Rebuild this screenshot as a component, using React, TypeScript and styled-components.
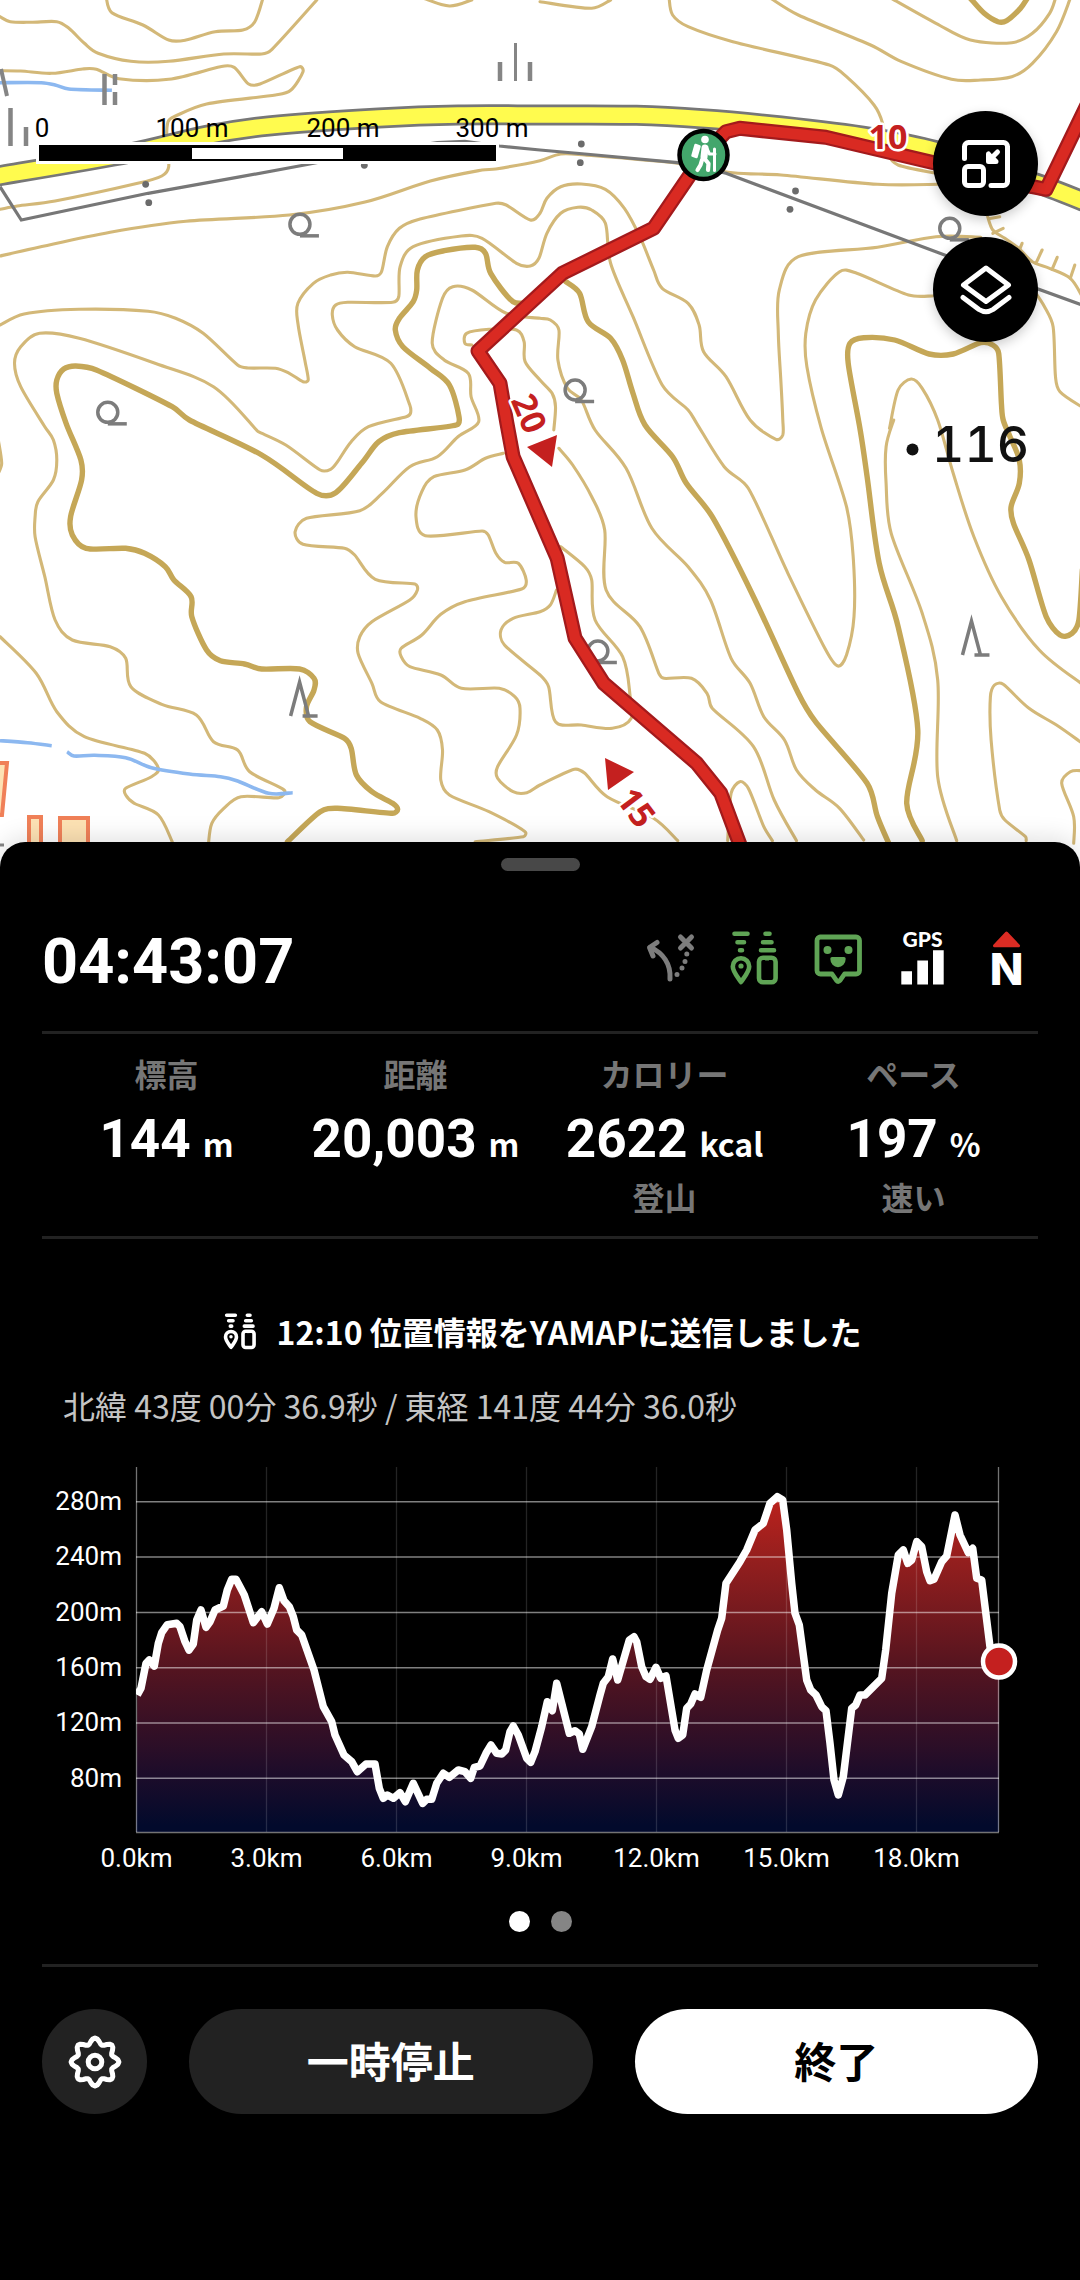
import React from 'react';
import styled, { createGlobalStyle } from 'styled-components';

const GlobalStyle = createGlobalStyle`
  * { box-sizing: border-box; }
  html, body { margin: 0; padding: 0; background: #000; }
  body { font-family: Roboto, 'Noto Sans CJK JP', sans-serif; color: #fff; }
  button { font: inherit; border: 0; padding: 0; margin: 0; cursor: pointer; }
  p, dl, dt, dd { margin: 0; }
`;

/* ---------- geometry helpers ---------- */

type Point = [number, number];
type Sheet = Record<string, { sx: number; sy: number; dx: number; dy: number }>;

// Survey sheets of the map: each letter in a trace switches to that sheet's origin.
const MAP_SHEETS: Sheet = {
  A: { sx: 2.904, sy: 3, dx: 0, dy: 0 },
  B: { sx: 2.904, sy: 3, dx: 540, dy: 0 },
  C: { sx: 2.904, sy: 3, dx: 0, dy: 420 },
  D: { sx: 2.904, sy: 3, dx: 540, dy: 420 },
};

const CHART_SHEETS: Sheet = {
  E: { sx: 3, sy: 3, dx: -2, dy: 0 },
  F: { sx: 3, sy: 3, dx: 498, dy: 0 },
};

const parse = (trace: string, sheets: Sheet): Point[] => {
  const points: Point[] = [];
  let sheet = Object.values(sheets)[0];
  trace.trim().split(/\s+/).forEach((token) => {
    if (sheets[token]) {
      sheet = sheets[token];
      return;
    }
    const [x, y] = token.split(',').map(Number);
    points.push([x / sheet.sx + sheet.dx, y / sheet.sy + sheet.dy]);
  });
  return points;
};

const fmt = (n: number) => n.toFixed(1);

const straight = (p: Point[]) => 'M' + p.map(([x, y]) => `${fmt(x)} ${fmt(y)}`).join('L');

const smooth = (p: Point[]) => {
  let d = `M${fmt(p[0][0])} ${fmt(p[0][1])}`;
  for (let i = 0; i < p.length - 1; i++) {
    const a = p[i - 1] || p[i];
    const b = p[i];
    const c = p[i + 1];
    const e = p[i + 2] || c;
    const len = Math.hypot(c[0] - b[0], c[1] - b[1]);
    const handle = (from: Point, to: Point) => {
      const span = Math.hypot(to[0] - from[0], to[1] - from[1]) || 1;
      const k = Math.min(1 / 6, (len * 0.38) / span);
      return [(to[0] - from[0]) * k, (to[1] - from[1]) * k];
    };
    const h1 = handle(a, c);
    const h2 = handle(b, e);
    d += `C${fmt(b[0] + h1[0])} ${fmt(b[1] + h1[1])} ${fmt(c[0] - h2[0])} ${fmt(c[1] - h2[1])} ${fmt(c[0])} ${fmt(c[1])}`;
  }
  return d;
};

/* ---------- map data ---------- */

const CONTOURS = [
  'A 0,50 30,65 90,67 165,65 200,85 245,130 285,160 380,184 490,184 650,162 760,162 790,148 920,0',
  'A 308,-10 325,38 415,75 490,120 540,120 625,95 705,90 740,65 765,-10',
  'A 0,212 60,213 150,220 240,207 280,208 345,236 490,238 640,200 680,202 722,252 755,252 870,200 880,215 845,270 800,285 600,312 510,348 488,365 484,420 490,500 470,528 400,550 160,603 50,618 0,628',
  'A 0,768 100,745 320,697 540,664 840,645 1060,606 1250,543 1400,510 1440,507 1568,482 B 60,462 130,465 400,490 560,518 700,525 980,553 1160,553',
  'B 375,-5 385,45 430,80 560,125 840,195 890,230 970,315 995,370 1010,460 1040,495 1150,520',
  'A 1230,-5 1305,18 1370,0',
  'B 0,5 150,25 205,0',
  'B 670,-5 750,45 960,135 1050,185 1195,238 1280,240 1370,230 1430,190 1500,95 1540,-5',
  'B 1020,-5 1150,70 1250,120 1370,128 1430,100 1480,40 1497,-5',
  'A 0,975 70,942 230,928 430,934 510,955 590,1000 690,1095 720,1104 800,1105 840,1120 880,1145 895,1140 885,1080 865,970 865,910 910,850 960,825 1010,817 1090,828 1108,815 1125,740 1160,685 1220,657 1440,610 1470,615 1540,660 B 0,640 20,595 60,560 120,552 190,568 245,625 290,710 330,810 355,865 430,910 462,975 475,1055 540,1130 D 610,0 685,58 705,45 705,0 B 700,1150 692,1000 695,870 750,770 980,742 1150,710 1280,712',
  'C 605,1275 615,1210 650,1165 700,1130 810,1133 825,1110 725,1055 690,990 620,965 570,885 470,853 380,800 365,715 320,680 210,660 160,600 130,470 102,350 102,290 110,245 155,180 165,120 155,60 A 130,1280 60,1160 42,1090 60,1040 115,1000 230,1015 450,1090 620,1160 745,1290 C 750,35 830,75 930,150 960,148 980,125 1020,65 1070,20 A 1180,1250 1192,1240 1190,1215 1135,1090 1030,1040 980,990 965,945 975,915 1010,907 1140,907 1158,890 1162,800 1200,740 1340,708 1400,715 1500,790 1540,798 1565,775 B 20,700 60,640 110,622 150,630 190,670 205,790 270,950 355,1155 430,1230 D 455,10 535,140 605,205 720,460 830,690 865,738 890,705 912,590 910,420 890,260 B 817,1285 775,1100 772,1000 800,900 870,815 920,820 1070,885 1140,888',
  'B 1440,880 1465,920 1490,980 1497,1130 1510,1175 1575,1222',
  'C 1380,1265 1520,1250 1525,1235 1420,1175 1305,1125 1280,1080 1285,990 1270,930 1220,895 1105,845 1080,790 1040,700 1045,650 1080,605 1190,540 1212,510 1205,492 1090,478 1030,405 1000,385 880,373 857,335 890,295 1045,272 1110,220 1190,140 1270,110 1330,50 1390,5 A 1368,1190 1360,1120 1290,1080 1255,1030 1285,895 1315,860 1370,870 1470,940 B 0,955 30,960 55,990 52,1080 80,1165 120,1200 160,1290 D 250,145 325,325 430,440 495,540 555,715 610,790 650,890 710,960 745,1050 800,1110 870,1165 940,1260',
  'A 1370,1035 1350,1030 1355,1000 1420,988 1500,990 1522,1025 1525,1085 B 0,1140 35,1180 45,1220 40,1290',
  'D 55,85 95,135 150,230 188,330 192,510 290,620 345,760 360,775 440,775 485,820 500,865 620,980 680,1140 745,1262',
  'C 1462,100 1410,115 1350,150 1260,170 1225,215 1208,290 1235,347 1400,333 1418,345 1440,400 1465,427 1505,430 1528,480 1515,507 1350,545 1280,583 1225,645 1165,685 1165,710 1190,740 1280,765 1340,805 1450,805 1495,830 1510,865 1500,945 1445,1040 1445,1075 1490,1115 1530,1118 D 0,1095 100,1048 130,1060 195,1130 330,1195 400,1262',
  'D 48,510 30,555 0,575 C 1490,595 1455,630 1465,675 D 0,765 25,800 45,905 120,915 210,925 265,895 262,830 240,710 160,600 150,480 130,440 60,380',
  'D 545,1262 555,1120 580,1085 605,1105 650,1220 675,1262',
  'B 1015,1285 1040,1170 1078,1137 1110,1165 D 1155,0 1200,160 1260,350 1340,530 1450,690 1575,793',
  'D 1027,0 1005,80 1005,190 1020,340 1110,580 1155,780 1155,1070 1210,1262',
  'D 1575,970 1500,915 1420,865 1345,793 1320,795 1308,830 1310,960 1335,1170 1350,1200 1410,1250 1412,1262',
  'D 1575,1052 1540,1055 1515,1090 1550,1190 1550,1270',
  'C -5,60 5,130 -5,160',
  'C 0,650 105,760 165,875 245,950 420,1000 460,1045 440,1070 365,1105 365,1125 390,1150 460,1185 500,1265',
  'B 1300,650 1315,690 1350,715 1390,745 1430,785 1480,805 1540,835 1575,890',
];

const CLIFF_TICKS = [
  'B 1303,656 1335,650', 'B 1315,700 1345,685', 'B 1390,755 1400,730',
  'B 1440,790 1458,750', 'B 1487,808 1502,772', 'B 1540,835 1553,795',
];

const INDEX_CONTOURS = [
  'B 1250,-5 1290,40 1330,65 1355,62 1395,25 1415,-5',
  'C 835,1265 930,1175 980,1165 1140,1180 1155,1168 1140,1150 1080,1115 1035,1065 1020,985 1000,955 900,905 890,860 912,810 912,775 870,747 760,747 710,732 640,722 600,690 557,590 555,530 505,480 480,440 420,400 365,385 250,385 210,345 205,290 237,180 235,120 A 192,1270 165,1180 165,1140 185,1107 220,1098 280,1110 500,1220 C 550,0 760,105 920,220 975,218 1050,130 1100,65 1160,38 1325,15 A 1333,1250 1305,1155 1250,1105 1170,1040 1148,990 1160,955 1200,905 1210,870 1212,810 1235,770 1290,752 1380,742 1410,760 1425,820 1490,905 1540,905',
  'B 75,845 115,880 140,965 205,1015 240,1080 270,1180 D 305,15 385,110 425,190 500,290 620,530 750,820 800,905 950,1090 980,1190 1015,1275',
  'D 1110,1262 1065,1150 1097,930 1040,620 985,430 950,170 B 930,1290 895,1090 900,1030 940,1013 1030,1020 1130,1062 1200,1062 1280,1028 1315,1035 1332,1060 1340,1210 D 1345,0 1365,50 1392,120 1392,190 1368,260 1375,310 1420,420 1470,590 1510,645 1545,640 1565,600 1575,450',
];

const STREAMS = [
  'A 0,248 120,248 160,255 200,267 325,271',
  'C 0,962 80,968 150,977',
  'C 195,995 215,1008 275,1006 365,1013 440,1043 550,1062 640,1070 690,1083 780,1120 850,1118',
];

const ROAD =
  'A -20,530 375,460 600,406 780,378 1100,354 1330,345 B 0,345 280,346 470,356 700,378 960,412 1150,452 1450,553 1600,613';

const POWER_LINE = 'A 0,560 62,660 430,580 700,530 900,492 1050,462 1270,428 1350,424 1450,438 B 0,450 130,462 400,488 540,520 1175,765 1600,925';

const ROUTE =
  'B 1600,290 1470,568 1430,560 1150,490 830,412 580,385 540,395 475,465 330,685 65,820 A 1388,1053 1452,1150 C 1472,10 1490,110 D 50,415 102,655 185,790 455,1030 525,1120 590,1300';

const DOTS: Point[] = parse('A 423,553 432,608 1058,496 B 120,432 117,488 742,573 726,628', MAP_SHEETS);
const BROADLEAF: Point[] = parse('A 871,673 313,1237 B 1190,685 102,1170 D 168,693', MAP_SHEETS);
const CONIFERS: Point[] = parse('C 870,888 D 1253,705', MAP_SHEETS);

const INK = '#6b6b6b';
const RED = '#c4201f';

const SCALE_TICKS = [
  { x: 42, label: '0' },
  { x: 192, label: '100 m' },
  { x: 343, label: '200 m' },
  { x: 492, label: '300 m' },
];

/* ---------- map ---------- */

const MapArea = styled.section`
  position: relative;
  background: #fff;
`;

const MapDrawing = styled.svg`
  display: block;
  width: 100%;
  height: auto;
`;

const MapControls = styled.div`
  position: absolute;
  top: 111px;
  right: 42px;
  display: flex;
  flex-direction: column;
  gap: 21px;
`;

const MapButton = styled.button`
  display: grid;
  place-items: center;
  width: 105px;
  height: 105px;
  border-radius: 50%;
  background: #000;
  box-shadow: 0 4px 12px rgba(0, 0, 0, 0.2);
`;

const RouteLabel = styled.text`
  font: 700 34px 'Noto Sans', sans-serif;
  fill: ${RED};
  stroke: #fff;
  stroke-width: 5px;
  stroke-linejoin: round;
  paint-order: stroke;
  text-anchor: middle;
  dominant-baseline: central;
`;

const SpotHeight = styled.text`
  font: 500 50px Inter, sans-serif;
  font-variant-numeric: tabular-nums;
  fill: #111;
`;

const ScaleLabel = styled.text`
  font: 400 26px Roboto, sans-serif;
  fill: #000;
  text-anchor: middle;
`;

const Hiker = () => (
  <g stroke="#fff" strokeLinecap="round" strokeLinejoin="round" fill="none">
    <circle cx="705" cy="139.500" r="3.800" fill="#fff" stroke="none" />
    <path d="M695.500 145L699.500 146.500L696.500 157L692.500 155.500Z" fill="#fff" strokeWidth="2.500" />
    <path d="M705 148L704 157" strokeWidth="7" />
    <path d="M706.500 147.500L709.500 154L715 154" strokeWidth="3" />
    <path d="M714.500 149V170.500" strokeWidth="3" />
    <path d="M704 158L708.500 163.500L708 170" strokeWidth="4.200" />
    <path d="M702 160L700.500 165L697.500 170" strokeWidth="4.200" />
  </g>
);

const TopoMap = () => (
  <MapDrawing viewBox="0 0 1080 868" role="img" aria-label="地図">
    <rect width="1080" height="868" fill="#fff" />
    <g fill="#fde2b4" stroke="#f08058" strokeWidth="4">
      <path d="M-4 763H7L2 815H-4z" />
      <rect x="29" y="817" width="12" height="44" />
      <rect x="60" y="818" width="28" height="44" />
    </g>
    <g fill="none" stroke="#d3b878" strokeWidth="3.100" strokeLinecap="round">
      {CONTOURS.map((t) => <path key={t} d={smooth(parse(t, MAP_SHEETS))} />)}
      {CLIFF_TICKS.map((t) => <path key={t} d={straight(parse(t, MAP_SHEETS))} />)}
    </g>
    <g fill="none" stroke="#c5a757" strokeWidth="5.400" strokeLinecap="round">
      {INDEX_CONTOURS.map((t) => <path key={t} d={smooth(parse(t, MAP_SHEETS))} />)}
    </g>
    <g fill="none" stroke="#8cb8f0" strokeWidth="3.600">
      {STREAMS.map((t) => <path key={t} d={smooth(parse(t, MAP_SHEETS))} />)}
    </g>
    <path d={straight(parse(POWER_LINE, MAP_SHEETS))} fill="none" stroke="#777" strokeWidth="3.200" />
    <path d={smooth(parse(ROAD, MAP_SHEETS))} fill="none" stroke="#777" strokeWidth="21" />
    <path d={smooth(parse(ROAD, MAP_SHEETS))} fill="none" stroke="#fffb4e" strokeWidth="15.500" />

    <g stroke="#858585" strokeWidth="4.500" fill="none">
      <path d="M104.500 74V105M115 74V85M115 92V105M10.500 108V146M26 127V146M500 62V81M530 62V81" />
      <path d="M515.500 43V81" strokeWidth="3" />
      <path d="M1 69L7 96" strokeWidth="4" />
      <path d="M0 845H4" strokeWidth="3" />
    </g>
    <g fill={INK}>
      {DOTS.map(([x, y]) => <circle key={`${x}-${y}`} cx={x} cy={y} r="3.400" />)}
    </g>
    <g fill="none" stroke="#7c7c7c" strokeWidth="3.500">
      {BROADLEAF.map(([x, y]) => (
        <g key={`${x}-${y}`}>
          <circle cx={x} cy={y} r="10" />
          <path d={`M${x} ${y + 11.5}h19`} />
        </g>
      ))}
      {CONIFERS.map(([x, y]) => (
        <path key={`${x}-${y}`} d={`M${x - 9} ${y}l9 -34l9 34m-6 0h15`} />
      ))}
    </g>
    <circle cx="912.500" cy="449.500" r="6" fill="#111" />
    <SpotHeight x="932" y="462">116</SpotHeight>

    <g fill="none" strokeLinejoin="round">
      <path d={straight(parse(ROUTE, MAP_SHEETS))} stroke="#a31a1c" strokeWidth="15" />
      <path d={straight(parse(ROUTE, MAP_SHEETS))} stroke="#d92a22" strokeWidth="10.500" />
    </g>
    <path d="M527 447L557 435L552 467ZM605 758L634 772L608 790Z" fill={RED} />
    <RouteLabel x="888" y="136">10</RouteLabel>
    <RouteLabel transform="translate(530 413) rotate(67)">20</RouteLabel>
    <RouteLabel transform="translate(637 807) rotate(53)">15</RouteLabel>

    <circle cx="703.500" cy="155" r="24" fill="#43a66c" stroke="#000" strokeWidth="4.500" />
    <Hiker />

    <rect x="36" y="142" width="463" height="22" fill="#fff" />
    <rect x="39" y="145" width="457" height="16" fill="#000" />
    <rect x="192" y="148" width="151" height="11" fill="#fff" />
    {SCALE_TICKS.map((t) => <ScaleLabel key={t.label} x={t.x} y="137">{t.label}</ScaleLabel>)}
  </MapDrawing>
);

const ShrinkIcon = () => (
  <svg width="48" height="48" viewBox="0 0 48 48" fill="none" stroke="#fff" strokeWidth="5" strokeLinecap="round" strokeLinejoin="round" aria-hidden="true">
    <path d="M2.500 18.500V6.500a4 4 0 0 1 4-4h35a4 4 0 0 1 4 4v35a4 4 0 0 1-4 4H29" />
    <rect x="2.500" y="26.500" width="19" height="19" rx="3.500" />
    <path d="M35.500 12L27.500 20" />
    <path d="M26.500 14V21.500H34L31 18.500L29 17z" fill="#fff" />
  </svg>
);

const LayersIcon = () => (
  <svg width="52" height="50" viewBox="0 0 52 50" fill="none" stroke="#fff" strokeWidth="5" strokeLinecap="round" strokeLinejoin="round" aria-hidden="true">
    <path d="M26 3L48.500 20L26 36.500L3.500 20Z" />
    <path d="M3 32.500L19 44.500Q26 49 33 44.500L49 32.500" />
  </svg>
);

/* ---------- status icons ---------- */

const StatusSvg = styled.svg<{ $size: number }>`
  display: block;
  flex: none;
  overflow: visible;
  width: ${(p) => p.$size}px;
  height: ${(p) => p.$size}px;
`;

const OffRouteIcon = () => (
  <StatusSvg $size={63} viewBox="0 0 63 63" fill="none" stroke="#7d7d7d" strokeWidth="5" strokeLinecap="round" strokeLinejoin="round" role="img" aria-label="ルート外れ警告">
    <path d="M31 53C32 38 24 27 11 21M18 16.500L10.500 21.500L14 30" />
    <path d="M41.500 11L52.500 22M52.500 11L41.500 22" />
    <path d="M47.800 28v0M46 35.500v0M43 42v0M38 48.500v0" />
  </StatusSvg>
);

const SharingIcon = ({ size, color, stroke }: { size: number; color: string; stroke: number }) => (
  <StatusSvg $size={size} viewBox="0 0 63 63" fill="none" stroke={color} strokeWidth={stroke} strokeLinecap="round" strokeLinejoin="round" role="img" aria-label="位置情報の送信">
    <path d="M11.500 7.800H24.500M14.500 16.200H21M17 24.200H19M42.500 7.800H46.500M40 16.200H48.500M38 24.200H51" />
    <path d="M18 56C13.500 49.500 9.800 45.500 9.800 40.500a8.200 8.200 0 0 1 16.400 0C26.200 45.500 22.500 49.500 18 56Z" />
    <circle cx="18" cy="40" r="2.600" fill={color} stroke="none" />
    <rect x="36" y="31.800" width="16.600" height="24.500" rx="4" />
    <path d="M41 31.500H47.500L46 34H42.500Z" fill={color} strokeWidth="1" />
  </StatusSvg>
);

const ChatIcon = () => (
  <StatusSvg $size={63} viewBox="0 0 63 63" fill="none" stroke="#5fa455" strokeWidth="4.800" strokeLinejoin="round" role="img" aria-label="メッセージ">
    <path d="M13 11H49a3.500 3.500 0 0 1 3.500 3.500V44.500a3.500 3.500 0 0 1-3.500 3.500H37.500L33 54.500Q31.200 56.500 29.500 54.500L25 48H13.500A3.500 3.500 0 0 1 10 44.500V14.500A3.500 3.500 0 0 1 13.500 11Z" />
    <g fill="#5fa455" stroke="none">
      <circle cx="20.500" cy="24" r="4" />
      <circle cx="41.500" cy="24" r="4" />
      <path d="M25 31H37a1.700 1.700 0 0 1 1.700 1.700a7.700 8.500 0 0 1-15.400 0A1.700 1.700 0 0 1 25 31Z" />
    </g>
  </StatusSvg>
);

const GpsText = styled.text`
  font: 900 21px Lato, sans-serif;
  fill: #fff;
  text-anchor: middle;
`;

const NorthText = styled.text`
  font: 800 44px Inter, sans-serif;
  fill: #fff;
  text-anchor: middle;
`;

const GpsIcon = () => (
  <StatusSvg $size={63} viewBox="0 0 63 63">
    <GpsText x="31.500" y="21">GPS</GpsText>
    <path d="M10.300 45.200H21V58.500H10.300ZM26.300 34.500H37V58.500H26.300ZM42 24.200H52.700V58.500H42Z" fill="#fff" />
  </StatusSvg>
);

const NorthIcon = () => (
  <StatusSvg $size={63} viewBox="0 0 63 63">
    <path d="M31.500 7L43.500 19.800H19.500Z" fill="#dc2c24" stroke="#dc2c24" strokeWidth="3" strokeLinejoin="round" />
    <NorthText x="31.500" y="58.500">N</NorthText>
  </StatusSvg>
);

const gearOutline = () => {
  const pts: Point[] = [];
  for (let i = 0; i < 64; i++) {
    const a = (i / 64) * Math.PI * 2;
    const r = 21 + 2.9 * Math.cos(8 * a);
    pts.push([27 + r * Math.sin(a), 27 - r * Math.cos(a)]);
  }
  return straight(pts) + 'Z';
};

const GearIcon = () => (
  <svg width="54" height="54" viewBox="0 0 54 54" fill="none" stroke="#fff" strokeWidth="5" strokeLinejoin="round" aria-hidden="true">
    <path d={gearOutline()} />
    <circle cx="27" cy="27" r="6.800" />
  </svg>
);

/* ---------- elevation chart ---------- */

const PROFILE =
  'E 292,735 303,715 318,640 328,630 343,648 355,580 365,548 382,524 410,520 420,530 435,575 447,600 460,582 470,510 483,480 498,532 510,515 525,480 550,468 562,420 575,388 588,388 600,410 613,435 640,518 665,485 682,522 702,475 718,413 732,452 748,470 760,500 770,540 785,555 822,660 850,770 875,815 885,855 912,915 935,935 952,965 978,942 1005,942 1018,1015 1030,1045 1042,1035 1060,1045 1080,1028 1096,1055 1120,1000 1148,1060 1160,1048 1175,1048 1190,1000 1210,970 1228,982 1255,960 1275,965 1292,985 1303,952 1320,948 1338,910 1353,885 1370,910 1385,912 1397,900 1410,845 1420,828 1435,855 1460,925 1472,937 1485,905 1505,830 1522,755 1537,782 ' +
  'F 50,700 88,850 105,842 118,852 128,898 155,830 180,735 190,700 205,680 218,627 233,690 268,570 282,560 290,575 305,650 318,680 330,688 348,652 362,685 378,678 405,840 415,865 428,855 440,775 452,762 465,732 482,742 500,660 533,540 545,505 558,400 600,335 620,300 645,240 670,220 690,160 712,140 728,150 740,240 755,400 765,490 778,525 800,690 812,720 828,735 845,770 858,782 870,880 882,990 895,1035 910,980 935,775 947,765 960,735 975,735 1025,685 1037,600 1055,430 1075,315 1090,300 1103,340 1115,330 1130,275 1145,290 1160,365 1170,392 1182,388 1205,335 1220,318 1245,195 1260,255 1285,308 1298,295 1310,385 1325,390 1350,590 1378,635';

const ALTITUDES = [280, 240, 200, 160, 120, 80];
const DISTANCES = [0, 3, 6, 9, 12, 15, 18];
const PLOT = { left: 94, right: 957, top: 17, bottom: 382 };

const ChartSvg = styled.svg`
  display: block;
  width: 100%;
  height: auto;
`;

const AxisLabel = styled.text<{ $anchor: string }>`
  font: 400 26px Roboto, sans-serif;
  fill: #fff;
  text-anchor: ${(p) => p.$anchor};
`;

const ElevationChart = () => {
  const points = parse(PROFILE, CHART_SHEETS);
  const line = smooth(points);
  return (
    <ChartSvg viewBox="0 0 996 440" role="img" aria-label="標高グラフ">
      <defs>
        <linearGradient id="elevation" gradientUnits="userSpaceOnUse" x1="0" y1="40" x2="0" y2="376">
          <stop offset="0" stopColor="#c0221c" />
          <stop offset="0.200" stopColor="#961f1e" />
          <stop offset="0.500" stopColor="#5a151f" />
          <stop offset="0.850" stopColor="#1c0c2a" />
          <stop offset="1" stopColor="#020a2c" />
        </linearGradient>
        <clipPath id="plot">
          <rect x={PLOT.left} y="0" width="902" height={PLOT.bottom} />
        </clipPath>
      </defs>
      <path d={`${line}L${PLOT.right} ${PLOT.bottom}L${PLOT.left} ${PLOT.bottom}Z`} fill="url(#elevation)" />
      {DISTANCES.map((km) => (
        <line key={km} x1={94.5 + (km / 3) * 130} x2={94.5 + (km / 3) * 130} y1={PLOT.top} y2={PLOT.bottom} stroke="#fff" strokeOpacity={km ? 0.14 : 0.45} strokeWidth="1.300" />
      ))}
      <line x1={PLOT.right - 0.5} x2={PLOT.right - 0.5} y1={PLOT.top} y2={PLOT.bottom} stroke="#fff" strokeOpacity="0.450" strokeWidth="1.300" />
      {ALTITUDES.map((m, i) => (
        <line key={m} x1={PLOT.left} x2={PLOT.right} y1={51.8 + i * 55.3} y2={51.8 + i * 55.3} stroke="#fff" strokeOpacity="0.500" strokeWidth="1.500" />
      ))}
      <line x1={PLOT.left} x2={PLOT.right} y1="382.500" y2="382.500" stroke="#fff" strokeOpacity="0.450" strokeWidth="1.300" />
      <path d={straight(points)} fill="none" stroke="#fff" strokeWidth="7.500" strokeLinejoin="round" clipPath="url(#plot)" />
      <circle cx="957" cy="211.500" r="16" fill={RED} stroke="#fff" strokeWidth="4.500" />
      {ALTITUDES.map((m, i) => (
        <AxisLabel key={m} $anchor="end" x="80" y={60 + i * 55.3}>{m}m</AxisLabel>
      ))}
      {DISTANCES.map((km) => (
        <AxisLabel key={km} $anchor="middle" x={94.5 + (km / 3) * 130} y="417">{km}.0km</AxisLabel>
      ))}
    </ChartSvg>
  );
};

/* ---------- bottom sheet ---------- */

const Panel = styled.main`
  position: relative;
  margin-top: -26px;
  padding: 16px 42px 42px;
  border-radius: 25px 25px 0 0;
  background: #000;
  box-shadow: 0 -4px 24px rgba(0, 0, 0, 0.12);
`;

const Handle = styled.button`
  display: block;
  width: 79px;
  height: 13px;
  margin: 0 auto;
  border-radius: 7px;
  background: #484848;
`;

const Header = styled.header`
  display: flex;
  align-items: flex-end;
  justify-content: space-between;
  padding: 55px 0 38px;
  border-bottom: 3px solid #222;
`;

const Timer = styled.time`
  font-size: 63px;
  line-height: 63px;
  font-weight: 700;
`;

const StatusIcons = styled.div`
  display: flex;
  gap: 21px;
  padding-bottom: 4px;
`;

const Stats = styled.dl`
  display: grid;
  grid-template-columns: repeat(4, 1fr);
  padding: 21px 0 16px;
  border-bottom: 3px solid #222;
  text-align: center;
`;

const Stat = styled.div`
  white-space: nowrap;
`;

const StatLabel = styled.dt`
  font-size: 32px;
  line-height: 42px;
  font-weight: 700;
  color: #767676;
`;

const StatValue = styled.dd`
  padding-top: 4px;
  font-size: 53px;
  line-height: 77px;
  font-weight: 700;
`;

const Unit = styled.span`
  margin-left: 12px;
  font-family: 'Noto Sans CJK JP', sans-serif;
  font-size: 32px;
  line-height: 1;
  font-weight: 700;
`;

const StatNote = styled.dd`
  font-size: 32px;
  line-height: 42px;
  font-weight: 700;
  color: #767676;
`;

const Notice = styled.p`
  display: flex;
  align-items: center;
  justify-content: center;
  gap: 16px;
  margin-top: 71px;
  font-family: 'Noto Sans CJK JP', sans-serif;
  font-size: 32px;
  line-height: 42px;
  font-weight: 700;
`;

const Coordinates = styled.p`
  margin: 32px 0 24px;
  padding: 0 21px;
  font-family: 'Noto Sans CJK JP', sans-serif;
  font-size: 32px;
  line-height: 42px;
  color: #c4c4c4;
`;

const Pager = styled.div`
  display: flex;
  justify-content: center;
  gap: 21px;
  padding: 21px 0 32px;
  border-bottom: 3px solid #222;
`;

const PageDot = styled.button<{ $active?: boolean }>`
  width: 21px;
  height: 21px;
  border-radius: 50%;
  background: ${(p) => (p.$active ? '#fff' : '#858585')};
`;

const Actions = styled.div`
  display: flex;
  gap: 42px;
  padding-top: 42px;
`;

const SettingsButton = styled.button`
  display: grid;
  place-items: center;
  flex: none;
  width: 105px;
  height: 105px;
  border-radius: 50%;
  background: #222;
`;

const ActionButton = styled.button<{ $primary?: boolean }>`
  flex: 1;
  height: 105px;
  padding-bottom: 5px;
  border-radius: 53px;
  font-family: 'Noto Sans CJK JP', sans-serif;
  font-size: 42px;
  line-height: 63px;
  font-weight: 700;
  color: ${(p) => (p.$primary ? '#000' : '#fff')};
  background: ${(p) => (p.$primary ? '#fff' : '#222')};
`;

const STATS = [
  { label: '標高', value: '144', unit: 'm' },
  { label: '距離', value: '20,003', unit: 'm' },
  { label: 'カロリー', value: '2622', unit: 'kcal', note: '登山' },
  { label: 'ペース', value: '197', unit: '%', note: '速い' },
];

export default function App() {
  return (
    <>
      <GlobalStyle />
      <MapArea>
        <TopoMap />
        <MapControls>
          <MapButton type="button" aria-label="地図を縮小表示"><ShrinkIcon /></MapButton>
          <MapButton type="button" aria-label="レイヤー"><LayersIcon /></MapButton>
        </MapControls>
      </MapArea>
      <Panel>
        <Handle type="button" aria-label="パネルを開閉" />
        <Header>
          <Timer>04:43:07</Timer>
          <StatusIcons>
            <OffRouteIcon />
            <SharingIcon size={63} color="#5fa455" stroke={4.6} />
            <ChatIcon />
            <GpsIcon />
            <NorthIcon />
          </StatusIcons>
        </Header>
        <Stats>
          {STATS.map((s) => (
            <Stat key={s.label}>
              <StatLabel>{s.label}</StatLabel>
              <StatValue>{s.value}<Unit>{s.unit}</Unit></StatValue>
              {s.note && <StatNote>{s.note}</StatNote>}
            </Stat>
          ))}
        </Stats>
        <Notice>
          <SharingIcon size={42} color="#fff" stroke={5.4} />
          12:10 位置情報をYAMAPに送信しました
        </Notice>
        <Coordinates>北緯 43度 00分 36.9秒 / 東経 141度 44分 36.0秒</Coordinates>
        <ElevationChart />
        <Pager>
          <PageDot type="button" $active aria-label="1ページ目" />
          <PageDot type="button" aria-label="2ページ目" />
        </Pager>
        <Actions>
          <SettingsButton type="button" aria-label="設定"><GearIcon /></SettingsButton>
          <ActionButton type="button">一時停止</ActionButton>
          <ActionButton type="button" $primary>終了</ActionButton>
        </Actions>
      </Panel>
    </>
  );
}
